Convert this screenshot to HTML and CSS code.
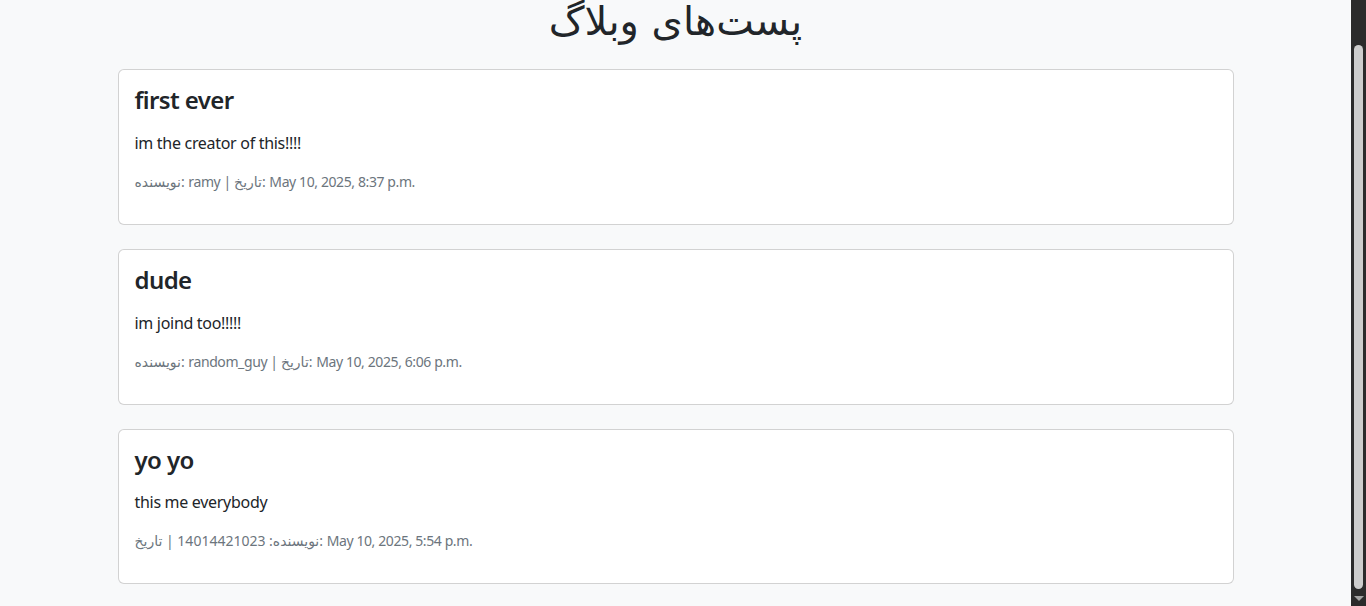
FILE: index.html
```html
<!DOCTYPE html>
<html lang="fa">
<head>
<meta charset="utf-8">
<title>پست‌های وبلاگ</title>
<link rel="stylesheet" href="styles.css">
</head>
<body>
<div class="viewport">
  <main class="page">
    <div class="container">
      <h1 class="page-title">پست‌های وبلاگ</h1>
      <div class="card">
        <div class="card-body">
          <h4 class="card-title">first ever</h4>
          <p class="card-text">im the creator of this!!!!</p>
          <p class="meta" dir="ltr">نویسنده: ramy | تاریخ: May 10, 2025, 8:37 p.m.</p>
        </div>
      </div>
      <div class="card">
        <div class="card-body">
          <h4 class="card-title">dude</h4>
          <p class="card-text">im joind too!!!!!</p>
          <p class="meta" dir="ltr">نویسنده: random_guy | تاریخ: May 10, 2025, 6:06 p.m.</p>
        </div>
      </div>
      <div class="card">
        <div class="card-body">
          <h4 class="card-title">yo yo</h4>
          <p class="card-text">this me everybody</p>
          <p class="meta" dir="ltr">نویسنده: 14014421023 | تاریخ: May 10, 2025, 5:54 p.m.</p>
        </div>
      </div>
    </div>
  </main>
  <div class="scrollbar" aria-hidden="true">
    <div class="sb-arrow sb-up"></div>
    <div class="sb-track"><div class="sb-thumb"></div></div>
    <div class="sb-arrow sb-down"></div>
  </div>
</div>
</body>
</html>
```

FILE: styles.css
```css
* { box-sizing: border-box; }
html, body { margin: 0; padding: 0; height: 100%; overflow: hidden; }
body {
  font-family: "Noto Sans", "DejaVu Sans", sans-serif;
  font-size: 16px;
  line-height: 1.5;
  color: #212529;
  background: #f8f9fa;
}
.viewport {
  display: flex;
  height: 606px;
}
.page {
  flex: 1;
  overflow: hidden;
}
.container {
  max-width: 1140px;
  margin: 0 auto;
  padding: 0 12px;
}
.page-title {
  margin: 0 0 27px;
  font-size: 40px;
  line-height: 42px;
  font-weight: 500;
  text-align: center;
  font-family: "DejaVu Sans", sans-serif;
}
.card {
  background: #fff;
  border: 1px solid rgba(0,0,0,.175);
  border-radius: 6px;
  margin-bottom: 24px;
}
.card-body {
  padding: 16px;
}
.card-title {
  margin: 0 0 16px;
  font-size: 24px;
  line-height: 1.2;
  font-weight: 600;
  letter-spacing: -0.6px;
}
.card-text {
  margin: 0 0 16px;
  letter-spacing: -0.3px;
}
.meta {
  margin: 0 0 16px;
  font-size: 14px;
  color: #6c757d;
  letter-spacing: -0.4px;
}
.scrollbar {
  width: 15px;
  background: #2b2b2b;
  display: flex;
  flex-direction: column;
  align-items: center;
}
.sb-arrow {
  height: 15px;
  width: 15px;
  display: flex;
  justify-content: center;
  align-items: center;
}
.sb-up { margin-top: -12px; height: 15px; }
.sb-up::before {
  content: "";
  border-left: 5px solid transparent;
  border-right: 5px solid transparent;
  border-bottom: 5px solid #a3a3a3;
}
.sb-down::before {
  content: "";
  border-left: 5px solid transparent;
  border-right: 5px solid transparent;
  border-top: 5px solid #a3a3a3;
}
.sb-track {
  flex: 1;
  width: 15px;
  display: flex;
  justify-content: center;
  padding-top: 42px;
  padding-bottom: 2px;
}
.sb-thumb {
  width: 9px;
  background: #cdcdcd;
  border-radius: 5px;
}
```
